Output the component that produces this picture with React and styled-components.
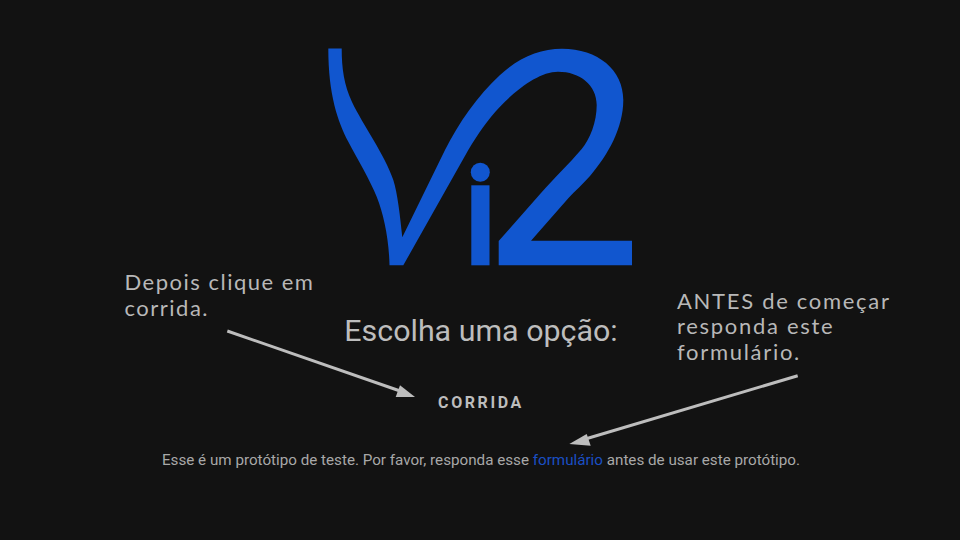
import React from 'react';
import styled, { createGlobalStyle } from 'styled-components';

const Global = createGlobalStyle`
  html, body { margin: 0; padding: 0; background: #121212; overflow: hidden; }
  #root { width: 960px; height: 540px; }
`;

const Page = styled.main`
  position: relative;
  width: 960px;
  height: 540px;
  box-sizing: border-box;
  padding: 48px 0 0 2px;
  background: #121212;
  display: flex;
  flex-direction: column;
  align-items: center;
  font-family: Roboto, "Liberation Sans", sans-serif;
  color: #bdbdbd;
`;

const Logo = styled.svg`
  display: block;
  width: 306px;
  height: 219px;
  margin-bottom: 47px;
  flex: none;
`;

const Heading = styled.h1`
  margin: 0 0 45px;
  font-size: 30.4px;
  line-height: 34px;
  font-weight: 400;
  color: #bdbdbd;
`;

const ActionButton = styled.button`
  background: none;
  border: 0;
  padding: 0;
  margin: 0 0 37px;
  font: 700 16px/20px Roboto, sans-serif;
  letter-spacing: 2.6px;
  color: #bdbdbd;
  text-transform: uppercase;
`;

const Notice = styled.p`
  margin: 0;
  font-size: 15.2px;
  line-height: 20px;
  color: #a8a8a8;
`;

const FormLink = styled.a`
  color: #1a4fc4;
  text-decoration: none;
`;

const Note = styled.div`
  position: absolute;
  left: ${p => p.$left}px;
  top: ${p => p.$top}px;
  width: ${p => p.$width}px;
  font-family: Lato, "Open Sans", sans-serif;
  font-size: 22px;
  line-height: 25.5px;
  letter-spacing: ${p => p.$spacing}px;
  color: #b8b8b8;
`;

const Arrows = styled.svg`
  position: absolute;
  inset: 0;
  width: 960px;
  height: 540px;
  pointer-events: none;
`;

export default function App() {
  return (
    <>
      <Global />
      <Page>
        <Logo viewBox="328 48 306 219" aria-label="Vi2">
          <path
            fill="#1156cf"
            d="M328.3 48.5 L341.7 48.5 C341.7 68 344 85 352 102 C363 125 385 155 393.3 180 C397.5 193 400 215 402.3 237.3 L445 150 C458 124 478 95 500 75 C520 57 540 48.8 562 48.8 C598 48.8 623.3 70 623.3 100 C623.3 128 608 155 590 176 C583 184 575 191 568.3 198.3 L531 240.7 L632 240.7 L632 265.3 L498.7 265.3 L498.7 241 L541 193 C555 177 568 165 581.7 149 C590 139 596.7 122 596.7 105 C596.7 85 580 71.7 558 71.7 C540 71.7 518 88 500 106.7 C488 119 478 134 468.3 150 L403.3 265.3 L389.5 265.3 C389 240 384 215 376.7 196.7 C370 180 358 160 348.3 141.7 C338 122 328.3 95 328.3 48.5 Z"
          />
          <circle cx="480.3" cy="172.3" r="9.5" fill="#1156cf" />
          <rect x="471.3" y="185.3" width="18.2" height="80" fill="#1156cf" />
        </Logo>
        <Heading>Escolha uma opção:</Heading>
        <ActionButton>Corrida</ActionButton>
        <Notice>
          Esse é um protótipo de teste. Por favor, responda esse <FormLink href="#">formulário</FormLink> antes de usar este protótipo.
        </Notice>

        <Note $left={124.5} $top={269} $width={220} $spacing={1.5}>Depois clique em corrida.</Note>
        <Note $left={677} $top={287.5} $width={240} $spacing={1.7}>ANTES de começar responda este formulário.</Note>

        <Arrows viewBox="0 0 960 540">
          <line x1="227.3" y1="331" x2="403" y2="392" stroke="#bdbdbd" strokeWidth="3" />
          <polygon points="415,397 395.7,397 400,385.3" fill="#bdbdbd" />
          <line x1="797.7" y1="375.7" x2="582" y2="440" stroke="#bdbdbd" strokeWidth="3" />
          <polygon points="569.3,444 586.7,434 590.7,445.7" fill="#bdbdbd" />
        </Arrows>
      </Page>
    </>
  );
}
